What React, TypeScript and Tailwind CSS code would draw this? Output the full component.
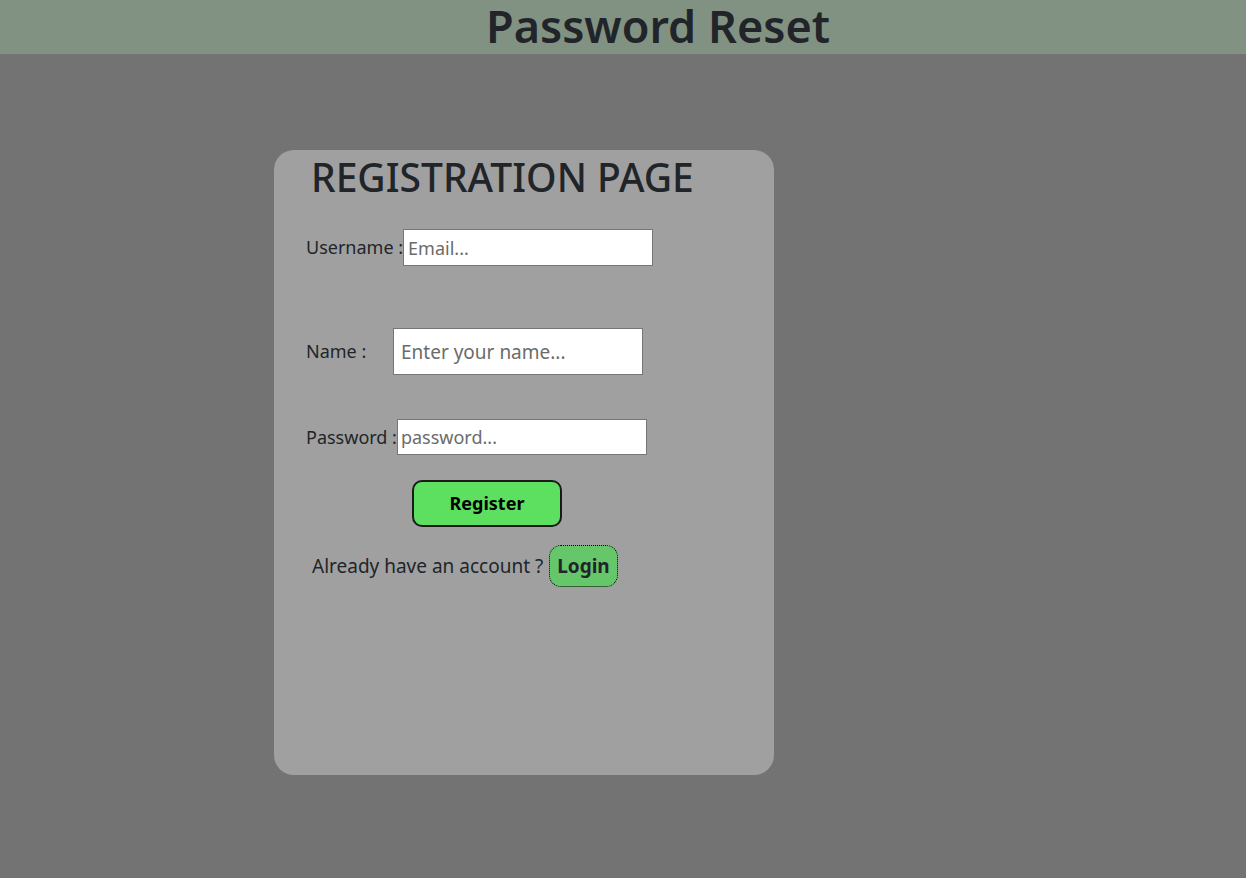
export default function App() {
  return (
    <div
      className="min-h-[878px] bg-[#737373] text-[#212529]"
      style={{ fontFamily: '"Noto Sans", "Open Sans", sans-serif' }}
    >
      <header className="h-[54px] bg-[#829282] flex justify-center">
        <h1 className="text-[45px] leading-[52px] font-semibold pl-[70px]">Password Reset</h1>
      </header>

      <div className="pl-[274px] pt-[96px]">
        <div className="w-[500px] h-[625px] bg-[#a0a0a0] rounded-[20px] pl-[32px] pt-[2px]">
          <h2 className="text-[39px] leading-[50px] font-medium pl-[5px]">REGISTRATION PAGE</h2>

          <div className="flex items-center mt-[27px] text-[18px]">
            <label className="whitespace-nowrap">Username :</label>
            <input
              placeholder="Email..."
              className="w-[250px] h-[37px] bg-white border border-[#767676] px-[4px] text-[18px] placeholder:text-[#6b6b6b] outline-none"
            />
          </div>

          <div className="flex items-center mt-[62px] text-[18px]">
            <label className="w-[87px] whitespace-nowrap">Name :</label>
            <input
              placeholder="Enter your name..."
              className="w-[250px] h-[47px] bg-white border border-[#767676] px-[7px] text-[19px] placeholder:text-[#6b6b6b] outline-none"
            />
          </div>

          <div className="flex items-center mt-[44px] text-[18px]">
            <label className="whitespace-nowrap">Password :</label>
            <input
              placeholder="password..."
              className="w-[250px] h-[36px] bg-white border border-[#767676] px-[3px] text-[18px] placeholder:text-[#6b6b6b] outline-none"
            />
          </div>

          <button className="ml-[106px] mt-[25px] w-[150px] h-[47px] bg-[#5ddf5f] border-2 border-[#1a1a1a] rounded-[10px] text-[18px] font-bold text-black">
            Register
          </button>

          <div className="flex items-center mt-[18px] ml-[6px] text-[19px]">
            <span>Already have an account ?</span>
            <button className="ml-[6px] h-[42px] px-[7px] bg-[#66c66a] border border-dotted border-black rounded-[12px] text-[19px] font-bold">
              Login
            </button>
          </div>
        </div>
      </div>
    </div>
  );
}
